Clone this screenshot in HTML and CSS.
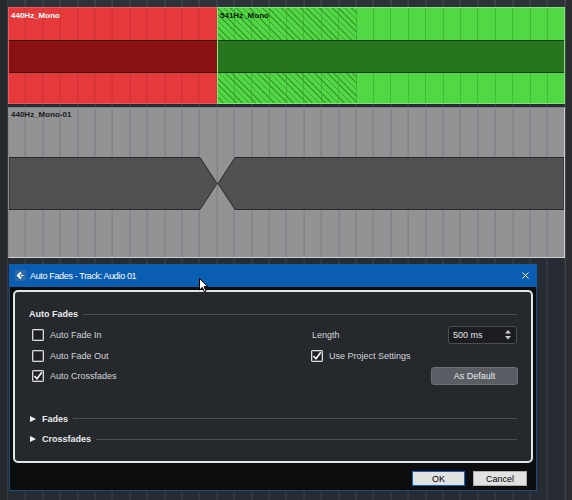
FILE: index.html
```html
<!DOCTYPE html>
<html lang="en">
<head>
  <meta charset="UTF-8">
  <meta name="viewport" content="width=device-width, initial-scale=1.0">
  <title>Auto Fades</title>
  <link rel="stylesheet" href="styles.css">
</head>
<body>
  <div class="arrange">
    <div class="gutter"></div>

    <div class="lane">
      <div class="ruler"></div>

      <div class="track">
        <div class="clip clip-red">
          <span class="clip-name">440Hz_Mono</span>
          <div class="wave"></div>
        </div>
        <div class="clip clip-green">
          <span class="clip-name">541Hz_Mono</span>
          <div class="wave"></div>
        </div>
      </div>

      <div class="clip clip-gray">
        <span class="clip-name">440Hz_Mono-01</span>
        <svg class="xfade" width="555" height="54" viewBox="0 0 555 54">
          <polygon points="0,0.5 191,0.5 208,26.5 191,52.5 0,52.5" />
          <polygon points="226,0.5 555,0.5 555,52.5 226,52.5 209,26.5" />
        </svg>
      </div>

      <div class="dialog">
        <div class="titlebar">
          <svg class="back" width="11" height="11" viewBox="0 0 11 11">
            <rect width="11" height="11" rx="1" fill="#2f6aa6" />
            <polyline points="6,2.5 3,5.5 6,8.5" fill="none" stroke="#fff" stroke-width="2" />
            <line x1="6" y1="5.5" x2="8.5" y2="5.5" stroke="#fff" stroke-width="1.2" />
          </svg>
          <span class="title">Auto Fades - Track: Audio 01</span>
          <svg class="close" width="7" height="7" viewBox="0 0 7 7">
            <path d="M0.5 0.5 L6.5 6.5 M6.5 0.5 L0.5 6.5" stroke="#fff" stroke-width="1" />
          </svg>
        </div>

        <div class="dialog-body">
          <div class="panel">
            <div class="section-head">
              <span>Auto Fades</span>
              <i class="rule"></i>
            </div>

            <div class="options">
              <label class="check"><span class="box"></span>Auto Fade In</label>
              <div class="length">
                <span>Length</span>
                <div class="spin">
                  <span>500 ms</span>
                  <svg width="6" height="10" viewBox="0 0 6 10">
                    <polygon points="3,0 6,3.5 0,3.5" fill="#c9cbce" />
                    <polygon points="0,6 6,6 3,9.5" fill="#c9cbce" />
                  </svg>
                </div>
              </div>

              <label class="check"><span class="box"></span>Auto Fade Out</label>
              <label class="check check-right">
                <span class="box"><svg width="10" height="10" viewBox="0 0 10 10"><path d="M1.5 5 L4 7.8 L8.8 1.2" fill="none" stroke="#fff" stroke-width="1.6" /></svg></span>Use Project Settings
              </label>

              <label class="check">
                <span class="box"><svg width="10" height="10" viewBox="0 0 10 10"><path d="M1.5 5 L4 7.8 L8.8 1.2" fill="none" stroke="#fff" stroke-width="1.6" /></svg></span>Auto Crossfades
              </label>
              <button class="as-default">As Default</button>
            </div>

            <div class="section-head fold fold-first">
              <span class="tri"></span>
              <span>Fades</span>
              <i class="rule"></i>
            </div>
            <div class="section-head fold">
              <span class="tri"></span>
              <span>Crossfades</span>
              <i class="rule"></i>
            </div>
          </div>

          <div class="footer">
            <button class="btn btn-ok">OK</button>
            <button class="btn">Cancel</button>
          </div>
        </div>
      </div>
    </div>

    <div class="edge"></div>
  </div>

  <svg class="cursor" width="10" height="15" viewBox="0 0 10 15">
    <path d="M0.5 0.5 L0.5 12 L3.3 9.4 L5.4 13.8 L7.1 13 L5 8.7 L8.6 8.7 Z" fill="#fff" stroke="#000" stroke-width="1" />
  </svg>
</body>
</html>
```

FILE: styles.css
```css
* { box-sizing: border-box; }

body {
  margin: 0;
  width: 572px;
  height: 500px;
  overflow: hidden;
  background: #26292d;
  font-family: "Liberation Sans", Arial, sans-serif;
  font-size: 9px;
  color: #d3d5d8;
}

.arrange {
  display: flex;
  height: 500px;
}
.gutter {
  width: 8px;
  background: #26292d;
  border-right: 1px solid #3a3e44;
}
.edge {
  width: 7px;
  background: #2b2d31;
  border-left: 1px solid #40444a;
}

/* grid lines every bar, pinned to the window so every lane lines up */
.lane, .ruler, .clip {
  background-image: repeating-linear-gradient(90deg, transparent 0 16.4px, var(--line) 16.4px 17.4px);
  background-position: 8.6px 0;
  background-attachment: fixed;
}
.lane {
  --line: #3a4049;
  width: 557px;
  background-color: #272c34;
}
.ruler {
  --line: #4a5059;
  height: 7px;
  background-color: #2c313a;
}

.track {
  display: flex;
  height: 97px;
}
.clip {
  display: flex;
  flex-direction: column;
  border: 1px solid;
}
.clip-name {
  height: 32px;
  padding: 3px 0 0 2px;
  font-size: 8px;
  font-weight: bold;
  line-height: 10px;
}
.wave {
  height: 33px;
  border-top: 1px solid;
  border-bottom: 1px solid;
}

.clip-red {
  --line: #c93237;
  width: 209px;
  border-color: #f25858;
  border-right: 0;
  background-color: #e5393c;
  color: #fff;
}
.clip-red .wave {
  background: #8a1215;
  border-color: #3c0909;
}

.clip-green {
  --line: #43b939;
  width: 348px;
  border-color: #80e974;
  background-color: #52d845;
  background-image:
    repeating-linear-gradient(45deg, transparent 0 3.4px, #3aa32f 3.4px 4.5px),
    repeating-linear-gradient(90deg, transparent 0 16.4px, var(--line) 16.4px 17.4px);
  background-size: 139px 100%, auto;
  background-repeat: no-repeat, repeat;
  background-position: 0 0, 8.6px 0;
  background-attachment: scroll, fixed;
  color: #0f1b0d;
}
.clip-green .wave {
  background: #27751f;
  border-color: #0f3a0b;
}

.clip-gray {
  --line: #7b7c7f;
  margin-top: 3px;
  height: 151px;
  border-color: #7d7e80 #cfcfcf #cfcfcf #8a8b8d;
  background-color: #929395;
  color: #1b1b1b;
}
.clip-gray .clip-name {
  height: 49px;
  padding-top: 2px;
}
.xfade {
  display: block;
}
.xfade polygon {
  fill: #505153;
  stroke: #28292a;
  stroke-width: 1;
}

/* dialog */
.dialog {
  width: 528px;
  margin: 6px 0 0 1px;
}
.titlebar {
  display: flex;
  align-items: center;
  gap: 4px;
  height: 23px;
  padding: 0 8px 0 6px;
  background: #0b5db2;
  color: #fff;
}
.title {
  flex: 1;
  letter-spacing: -0.35px;
}
.back, .close {
  display: block;
}

.dialog-body {
  padding: 3px 3px 0 3px;
  background: #0c0d0f;
  border: 1px solid #1c4a7c;
  border-top: 0;
}
.panel {
  height: 173px;
  padding: 16px 14px 0 14px;
  background: #25282d;
  border: 2px solid #e4e4e4;
  border-radius: 5px;
}

.section-head {
  display: flex;
  align-items: center;
  gap: 5px;
  height: 12px;
  font-weight: bold;
  color: #ececec;
}
.rule {
  flex: 1;
  height: 1px;
  background: #4a4d52;
}
.fold-first { margin-top: 26px; }
.fold + .fold { margin-top: 8.5px; }
.tri {
  width: 0;
  height: 0;
  margin: 0 1px 0 1px;
  border-left: 6px solid #f0f0f0;
  border-top: 3.5px solid transparent;
  border-bottom: 3.5px solid transparent;
}

.options {
  display: grid;
  grid-template-columns: 283px 1fr;
  grid-auto-rows: 20.5px;
  margin-top: 5px;
  align-items: center;
}
.check {
  display: flex;
  align-items: center;
  gap: 6px;
  margin-left: 3px;
}
.check-right { margin-left: -1px; }
.box {
  display: flex;
  align-items: center;
  justify-content: center;
  width: 12px;
  height: 12px;
  background: #1d1f23;
  border: 1px solid #dadada;
  border-radius: 1px;
  box-shadow: inset 0 0 0 1px #5c5e62;
}
.box svg { display: block; }

.length {
  display: flex;
  align-items: center;
  justify-content: space-between;
}
.spin {
  display: flex;
  align-items: center;
  justify-content: space-between;
  width: 69px;
  height: 18px;
  padding: 0 5px 0 4px;
  background: #1b1d21;
  border: 1px solid #4b4e54;
  border-radius: 3px;
  color: #e6e6e6;
}

.as-default {
  justify-self: end;
  width: 87px;
  height: 18px;
  margin-right: -1px;
  font: inherit;
  color: #e8e8e8;
  background: #5a5e64;
  border: 1px solid #6d7177;
  border-radius: 3px;
}

.footer {
  display: flex;
  justify-content: flex-end;
  gap: 8px;
  padding: 8px 6px 4px 0;
}
.btn {
  width: 54px;
  height: 15px;
  padding: 0;
  font: inherit;
  color: #000;
  background: #e1e1e1;
  border: 1px solid #adadad;
}
.btn-ok {
  width: 53px;
  border-color: #0b63c5;
}

.cursor {
  position: absolute;
  left: 199px;
  top: 278px;
}
```
